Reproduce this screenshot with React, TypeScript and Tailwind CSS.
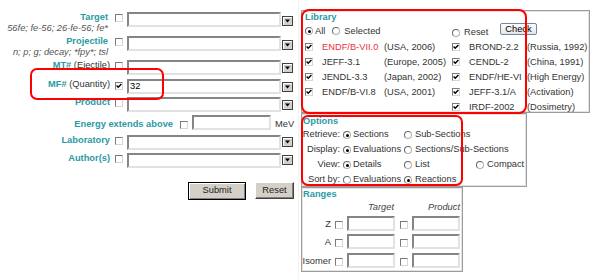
import React from "react";

const TEAL = "text-[#2b9aa3]";

function Checkbox({ checked = false, className = "" }: { checked?: boolean; className?: string }) {
  return (
    <span
      className={`relative block w-[8px] h-[8px] shrink-0 bg-white border border-t-[#7a7a7a] border-l-[#7a7a7a] border-b-[#d6d6d6] border-r-[#d6d6d6] ${className}`}
    >
      {checked && (
        <svg viewBox="0 0 6 6" className="absolute inset-0 w-full h-full">
          <polyline points="0.6,2.6 2.2,4.3 5.4,0.9" fill="none" stroke="#000" strokeWidth="1.4" />
        </svg>
      )}
    </span>
  );
}

function Radio({ checked = false, className = "" }: { checked?: boolean; className?: string }) {
  return (
    <span
      className={`flex items-center justify-center w-[8px] h-[8px] shrink-0 rounded-full bg-white border border-[#b0b0b0] border-t-[#6a6a6a] border-l-[#6a6a6a] ${className}`}
    >
      {checked && <span className="block w-[3px] h-[3px] rounded-full bg-black" />}
    </span>
  );
}

function Field({ className = "", value = "" }: { className?: string; value?: string }) {
  return (
    <div
      className={`h-[15px] shrink-0 bg-white border-2 border-t-[#858585] border-l-[#858585] border-b-[#e2e2e2] border-r-[#e2e2e2] text-black leading-[11px] pl-[1px] ${className}`}
    >
      {value}
    </div>
  );
}

function Arrow({ className = "" }: { className?: string }) {
  return (
    <span
      className={`flex items-center justify-center w-[11px] h-[10px] shrink-0 bg-[#d4d0c8] border border-[#404040] shadow-[inset_1px_1px_0_#ffffff] ${className}`}
    >
      <svg width="5" height="4" viewBox="0 0 5 4">
        <path d="M0 0.5H5L2.5 3.5Z" fill="#000" />
      </svg>
    </span>
  );
}

const boxCls = "border border-[#9c9c9c] p-[1px] shadow-[inset_0_0_0_1px_#e4e4e4]";

export default function App() {
  const libLeft = [
    { name: "ENDF/B-VII.0", note: "(USA, 2006)", red: true },
    { name: "JEFF-3.1", note: "(Europe, 2005)" },
    { name: "JENDL-3.3", note: "(Japan, 2002)" },
    { name: "ENDF/B-VI.8", note: "(USA, 2001)" },
  ];
  const libRight = [
    { name: "BROND-2.2", note: "(Russia, 1992)" },
    { name: "CENDL-2", note: "(China, 1991)" },
    { name: "ENDF/HE-VI", note: "(High Energy)" },
    { name: "JEFF-3.1/A", note: "(Activation)" },
    { name: "IRDF-2002", note: "(Dosimetry)" },
  ];
  const options: { label: string; items: { text: string; checked: boolean }[] }[] = [
    { label: "Retrieve:", items: [{ text: "Sections", checked: true }, { text: "Sub-Sections", checked: false }] },
    { label: "Display:", items: [{ text: "Evaluations", checked: true }, { text: "Sections/Sub-Sections", checked: false }] },
    {
      label: "View:",
      items: [
        { text: "Details", checked: true },
        { text: "List", checked: false },
        { text: "Compact", checked: false },
      ],
    },
    { label: "Sort by:", items: [{ text: "Evaluations", checked: false }, { text: "Reactions", checked: true }] },
  ];

  return (
    <div className="relative flex w-[596px] h-[279px] overflow-hidden bg-white font-['Liberation_Sans',Arial,sans-serif] text-[9.3px] text-[#333]">
      {/* LEFT PANEL */}
      <div className="w-[299px] shrink-0 border-r border-[#f3f3f3] pt-[12px] flex flex-col">
        {/* Target */}
        <div className="flex items-start h-[24px]">
          <div className="w-[111px] pr-[3px] text-right leading-[10.5px] whitespace-nowrap">
            <div className={`font-bold ${TEAL}`}>Target</div>
            <div className="italic text-[#555]">56fe; fe-56; 26-fe-56; fe*</div>
          </div>
          <Checkbox className="ml-[4px] mt-[2px]" />
          <Field className="ml-[4px] w-[154px]" />
          <Arrow className="ml-[1px] mt-[4px]" />
        </div>
        {/* Projectile */}
        <div className="flex items-start h-[24px]">
          <div className="w-[111px] pr-[3px] text-right leading-[10.5px] whitespace-nowrap">
            <div className={`font-bold ${TEAL}`}>Projectile</div>
            <div className="italic text-[#555]">n; p; g; decay; *fpy*; tsl</div>
          </div>
          <Checkbox className="ml-[4px] mt-[2px]" />
          <Field className="ml-[4px] w-[154px]" />
          <Arrow className="ml-[1px] mt-[4px]" />
        </div>
        {/* MT# */}
        <div className="flex items-start h-[19px]">
          <div className="w-[111px] pr-[1px] text-right leading-[11px] whitespace-nowrap">
            <span className={`font-bold ${TEAL}`}>MT#</span> (Ejectile)
          </div>
          <Checkbox className="ml-[4px] mt-[2px]" />
          <Field className="ml-[4px] w-[154px]" />
          <Arrow className="ml-[1px] mt-[3px]" />
        </div>
        {/* MF# */}
        <div className="flex items-start h-[18px]">
          <div className="w-[111px] pr-[1px] text-right leading-[11px] whitespace-nowrap">
            <span className={`font-bold ${TEAL}`}>MF#</span> (Quantity)
          </div>
          <Checkbox checked className="ml-[4px] mt-[3px]" />
          <Field className="ml-[4px] w-[154px]" value="32" />
          <Arrow className="ml-[1px] mt-[3px]" />
        </div>
        {/* Product */}
        <div className="flex items-start h-[18px]">
          <div className={`w-[111px] pr-[1px] text-right leading-[11px] whitespace-nowrap font-bold ${TEAL}`}>Product</div>
          <Checkbox className="ml-[4px] mt-[2px]" />
          <Field className="ml-[4px] w-[154px]" />
          <Arrow className="ml-[1px] mt-[3px]" />
        </div>
        {/* Energy */}
        <div className="flex items-start h-[20px]">
          <div className={`w-[173px] text-right leading-[11px] mt-[4px] whitespace-nowrap font-bold ${TEAL}`}>
            Energy extends above
          </div>
          <Checkbox className="ml-[7px] mt-[6px]" />
          <Field className="ml-[4px] w-[79px]" />
          <span className="ml-[4px] mt-[4px] leading-[11px]">MeV</span>
        </div>
        {/* Laboratory */}
        <div className="flex items-start h-[18px]">
          <div className={`w-[111px] pr-[1px] text-right leading-[11px] whitespace-nowrap font-bold ${TEAL}`}>Laboratory</div>
          <Checkbox className="ml-[4px] mt-[2px]" />
          <Field className="ml-[4px] w-[154px]" />
          <Arrow className="ml-[1px] mt-[2px]" />
        </div>
        {/* Author */}
        <div className="flex items-start h-[29px]">
          <div className={`w-[111px] pr-[1px] text-right leading-[11px] whitespace-nowrap font-bold ${TEAL}`}>Author(s)</div>
          <Checkbox className="ml-[4px] mt-[2px]" />
          <Field className="ml-[4px] w-[154px]" />
          <Arrow className="ml-[1px] mt-[2px]" />
        </div>
        {/* Buttons */}
        <div className="flex items-start">
          <button className="ml-[188px] w-[58px] h-[18px] bg-[#d4d0c8] border border-black shadow-[inset_1px_1px_0_#ffffff,inset_-1px_-1px_0_#808080] text-[#222] text-[9.3px] leading-none">
            Submit
          </button>
          <button className="ml-[9px] w-[39px] h-[17px] bg-[#d4d0c8] border border-[#ffffff] border-b-[#404040] border-r-[#404040] shadow-[inset_-1px_-1px_0_#808080] text-[#222] text-[9.3px] leading-none">
            Reset
          </button>
        </div>
      </div>

      {/* RIGHT PANEL */}
      <div className="flex flex-col pt-[10px] pl-[2px]">
        {/* Library */}
        <div className={`w-[289px] h-[103px] shrink-0 ${boxCls}`}>
          <div className={`font-bold ${TEAL} leading-[11px] pl-[2px]`}>Library</div>
          <div className="flex items-start h-[17px]">
            <div className="flex items-start w-[149px]">
              <Radio checked className="ml-[2px] mt-[4px]" />
              <span className="ml-[2px] mt-[3px] leading-[11px]">All</span>
              <Radio className="ml-[7px] mt-[4px]" />
              <span className="ml-[4px] mt-[3px] leading-[11px]">Selected</span>
            </div>
            <div className="flex items-start w-[48px]">
              <Radio className="mt-[6px]" />
              <span className="ml-[4px] mt-[4px] leading-[11px]">Reset</span>
            </div>
            <button className="w-[37px] h-[12px] rounded-[2px] border border-[#7186a4] bg-gradient-to-b from-[#ffffff] to-[#e6e6e6] text-black text-[9.3px] leading-[10px]">
              Check
            </button>
          </div>
          <div className="grid grid-cols-[19px_62px_68px_17px_58px_1fr] auto-rows-[15px] leading-[15px] whitespace-nowrap">
            {libRight.map((r, i) => {
              const l = libLeft[i];
              return (
                <React.Fragment key={r.name}>
                  <div>{l && <Checkbox checked className="ml-[2px] mt-[3px]" />}</div>
                  <div className={l && l.red ? "text-[#f0303c]" : ""}>{l ? l.name : ""}</div>
                  <div>{l ? l.note : ""}</div>
                  <div>
                    <Checkbox checked className="mt-[3px]" />
                  </div>
                  <div>{r.name}</div>
                  <div>{r.note}</div>
                </React.Fragment>
              );
            })}
          </div>
        </div>

        {/* Options */}
        <div className={`w-[226px] h-[74px] shrink-0 ${boxCls}`}>
          <div className={`font-bold ${TEAL} leading-[11px] mt-[1px]`}>Options</div>
          <div className="grid grid-cols-[37px_64px_72px_1fr] auto-rows-[15px] leading-[15px] whitespace-nowrap">
            {options.map((o) => (
              <React.Fragment key={o.label}>
                <div className="flex justify-end">{o.label}</div>
                {o.items.map((it, j) => (
                  <div key={it.text + j} className="flex items-start">
                    <Radio checked={it.checked} className={j === 0 ? "ml-[3px] mt-[4px]" : "mt-[4px]"} />
                    <span className={j === 0 ? "ml-[2px]" : "ml-[3px]"}>{it.text}</span>
                  </div>
                ))}
                {o.items.length === 2 && <div />}
              </React.Fragment>
            ))}
          </div>
        </div>

        {/* Ranges */}
        <div className={`w-[162px] h-[85px] shrink-0 ${boxCls}`}>
          <div className={`font-bold ${TEAL} leading-[11px]`}>Ranges</div>
          <div className="flex italic text-[#444] leading-[11px] mt-[2px]">
            <span className="w-[91px] text-right">Target</span>
            <span className="w-[66px] text-right">Product</span>
          </div>
          {["Z", "A", "Isomer"].map((lab, i) => (
            <div key={lab} className={`flex items-start h-[15px] ${i === 0 ? "mt-[3px]" : i === 1 ? "mt-[3px]" : "mt-[4px]"}`}>
              <span className="w-[28px] text-right leading-[11px] mt-[3px] whitespace-nowrap flex justify-end">{lab}</span>
              <Checkbox className="ml-[4px] mt-[5px]" />
              <Field className="ml-[4px] w-[48px]" />
              <Checkbox className="ml-[5px] mt-[5px]" />
              <Field className="ml-[4px] w-[48px]" />
            </div>
          ))}
        </div>
      </div>

      {/* Red annotation outlines */}
      <div className="absolute left-[30px] top-[68px] w-[134px] h-[32px] border-2 border-[#f00] rounded-[7px] pointer-events-none" />
      <div className="absolute left-[301px] top-[9px] w-[226px] h-[105px] border-2 border-[#f00] rounded-[8px] pointer-events-none" />
      <div className="absolute left-[301px] top-[115px] w-[162px] h-[71px] border-2 border-[#f00] rounded-[7px] pointer-events-none" />
    </div>
  );
}
